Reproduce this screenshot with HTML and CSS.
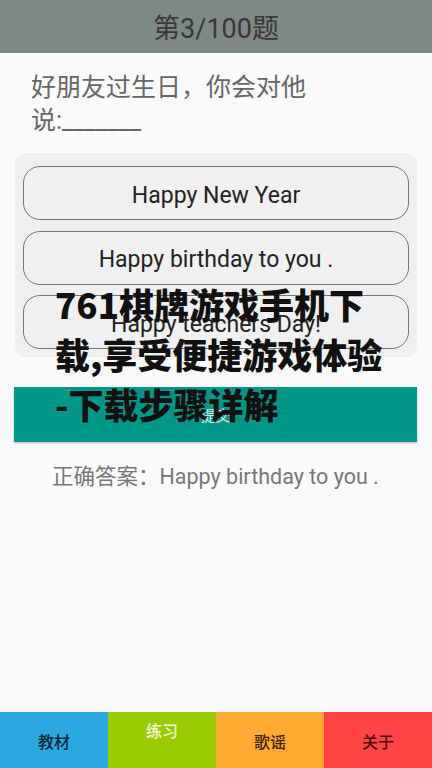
FILE: index.html
```html
<!DOCTYPE html>
<html lang="zh-CN">
<head>
    <meta charset="UTF-8"/>
    <meta name="viewport" content="width=device-width, initial-scale=1.0"/>
    <title>练习</title>
    <link rel="stylesheet" href="styles.css">
</head>
<body>
<div class="page">
    <header class="top-bar">第3/100题</header>

    <p class="question">好朋友过生日，你会对他<br>说:_______</p>

    <div class="options">
        <button class="option">Happy New Year</button>
        <button class="option">Happy birthday to you .</button>
        <button class="option">Happy teachers Day!</button>
    </div>

    <button class="submit">提交</button>

    <p class="answer">正确答案：Happy birthday to you .</p>

    <nav class="tabs">
        <a class="tab tab-book">教材</a>
        <a class="tab tab-practice active">练习</a>
        <a class="tab tab-song">歌谣</a>
        <a class="tab tab-about">关于</a>
    </nav>
</div>

<div class="watermark">761棋牌游戏手机下载,享受便捷游戏体验-下载步骤详解</div>
</body>
</html>
```

FILE: styles.css
```css
body {
    margin: 0;
    background: #fafafa;
    font-family: Roboto, "Noto Sans CJK SC", sans-serif;
}

.page {
    display: flex;
    flex-direction: column;
    height: 100vh;
}

.top-bar {
    height: 53px;
    background: #7e8985;
    color: #383838;
    font-size: 27px;
    display: flex;
    justify-content: center;
    align-items: center;
}

.question {
    margin: 18px 0 0;
    padding-left: 31px;
    font-size: 25px;
    line-height: 33px;
    color: #666;
}

.options {
    margin: 16px 15px 0;
    padding: 13px 8px 8px;
    background: #efefef;
    border-radius: 10px;
    display: flex;
    flex-direction: column;
    gap: 10.5px;
}

.option {
    height: 54px;
    border: 1.5px solid #767676;
    border-radius: 17px;
    background: #f0f0f0;
    font-family: Roboto, sans-serif;
    font-size: 23px;
    color: #222;
    padding: 4px 0 0;
}

.submit {
    margin: 30px 15px 0 14px;
    height: 55px;
    border: none;
    background: #009688;
    color: #d8eeea;
    font-family: "Noto Sans CJK SC", sans-serif;
    font-size: 15px;
    box-shadow: 0 1px 2px rgba(0, 0, 0, 0.25);
}

.answer {
    margin: 20px 0 0;
    padding-left: 52px;
    font-size: 21.5px;
    line-height: 30px;
    color: #777;
}

.tabs {
    margin-top: auto;
    height: 56px;
    display: grid;
    grid-template-columns: repeat(4, 1fr);
}

.tab {
    display: flex;
    justify-content: center;
    align-items: center;
    padding-top: 2px;
    font-family: "Noto Sans CJK SC", sans-serif;
    font-size: 16px;
    font-weight: 500;
}

.tab-book {
    background: #2aa8e0;
    color: #10283a;
}

.tab-practice {
    background: #99cc00;
    color: #f4f9dc;
}

.tab-practice.active {
    align-items: flex-start;
    padding-top: 6px;
}

.tab-song {
    background: #ffab33;
    color: #3a2800;
}

.tab-about {
    background: #ff4444;
    color: #4a0a0a;
}

.watermark {
    position: absolute;
    left: 55px;
    top: 279px;
    width: 334px;
    line-break: anywhere;
    font-family: "Noto Sans CJK SC", sans-serif;
    font-weight: 900;
    font-size: 35px;
    line-height: 50px;
    color: #111;
}
```
